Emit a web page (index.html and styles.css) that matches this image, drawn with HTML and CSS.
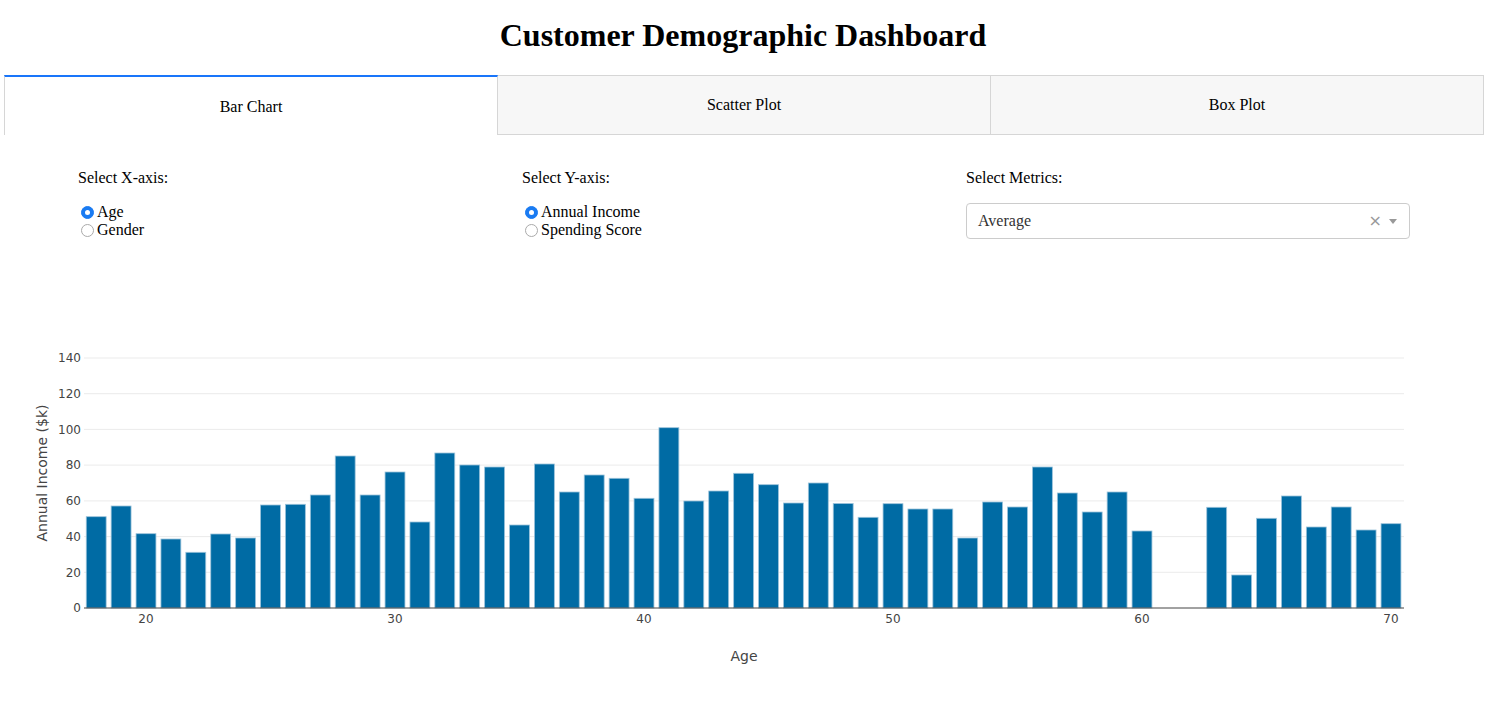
FILE: index.html
```html
<!DOCTYPE html>
<html>
<head>
<meta charset="utf-8">
<title>Customer Demographic Dashboard</title>
<link rel="stylesheet" href="styles.css">
</head>
<body>
<h1 class="title">Customer Demographic Dashboard</h1>
<div class="tabs">
  <div class="tab tab--selected">Bar Chart</div>
  <div class="tab">Scatter Plot</div>
  <div class="tab">Box Plot</div>
</div>
<div class="controls">
  <div class="control">
    <div class="control-label">Select X-axis:</div>
    <div class="radio-group">
      <label class="radio"><input type="radio" name="xaxis" checked><span>Age</span></label>
      <label class="radio"><input type="radio" name="xaxis"><span>Gender</span></label>
    </div>
  </div>
  <div class="control">
    <div class="control-label">Select Y-axis:</div>
    <div class="radio-group">
      <label class="radio"><input type="radio" name="yaxis" checked><span>Annual Income</span></label>
      <label class="radio"><input type="radio" name="yaxis"><span>Spending Score</span></label>
    </div>
  </div>
  <div class="control">
    <div class="control-label">Select Metrics:</div>
    <div class="dropdown">
      <span class="dropdown-value">Average</span>
      <span class="dropdown-clear">×</span>
      <span class="dropdown-arrow"></span>
    </div>
  </div>
</div>
<div class="chart">
<svg class="plot" width="1486" height="450" viewBox="0 258 1486 450" xmlns="http://www.w3.org/2000/svg">
  <g class="grid">
    <line x1="84" x2="1404" y1="572.3" y2="572.3"/>
    <line x1="84" x2="1404" y1="536.6" y2="536.6"/>
    <line x1="84" x2="1404" y1="500.9" y2="500.9"/>
    <line x1="84" x2="1404" y1="465.1" y2="465.1"/>
    <line x1="84" x2="1404" y1="429.4" y2="429.4"/>
    <line x1="84" x2="1404" y1="393.7" y2="393.7"/>
    <line x1="84" x2="1404" y1="358" y2="358"/>
  </g>
  <g class="bars">
    <rect x="86.25" y="516.7" width="19.9" height="91.3"/>
    <rect x="111.15" y="506" width="19.9" height="102"/>
    <rect x="136.05" y="533.7" width="19.9" height="74.3"/>
    <rect x="160.95" y="539" width="19.9" height="69"/>
    <rect x="185.85" y="552.3" width="19.9" height="55.7"/>
    <rect x="210.75" y="534" width="19.9" height="74"/>
    <rect x="235.65" y="538" width="19.9" height="70"/>
    <rect x="260.55" y="505" width="19.9" height="103"/>
    <rect x="285.45" y="504.3" width="19.9" height="103.7"/>
    <rect x="310.35" y="495" width="19.9" height="113"/>
    <rect x="335.25" y="456" width="19.9" height="152"/>
    <rect x="360.15" y="495" width="19.9" height="113"/>
    <rect x="385.05" y="472" width="19.9" height="136"/>
    <rect x="409.95" y="522" width="19.9" height="86"/>
    <rect x="434.85" y="453" width="19.9" height="155"/>
    <rect x="459.75" y="465" width="19.9" height="143"/>
    <rect x="484.65" y="467" width="19.9" height="141"/>
    <rect x="509.55" y="525" width="19.9" height="83"/>
    <rect x="534.45" y="464" width="19.9" height="144"/>
    <rect x="559.35" y="492" width="19.9" height="116"/>
    <rect x="584.25" y="475" width="19.9" height="133"/>
    <rect x="609.15" y="478.3" width="19.9" height="129.7"/>
    <rect x="634.05" y="498.3" width="19.9" height="109.7"/>
    <rect x="658.95" y="427.7" width="19.9" height="180.3"/>
    <rect x="683.85" y="501" width="19.9" height="107"/>
    <rect x="708.75" y="491" width="19.9" height="117"/>
    <rect x="733.65" y="473.3" width="19.9" height="134.7"/>
    <rect x="758.55" y="484.7" width="19.9" height="123.3"/>
    <rect x="783.45" y="503" width="19.9" height="105"/>
    <rect x="808.35" y="483" width="19.9" height="125"/>
    <rect x="833.25" y="503.5" width="19.9" height="104.5"/>
    <rect x="858.15" y="517.3" width="19.9" height="90.7"/>
    <rect x="883.05" y="503.7" width="19.9" height="104.3"/>
    <rect x="907.95" y="509" width="19.9" height="99"/>
    <rect x="932.85" y="509" width="19.9" height="99"/>
    <rect x="957.75" y="538" width="19.9" height="70"/>
    <rect x="982.65" y="502" width="19.9" height="106"/>
    <rect x="1007.55" y="507" width="19.9" height="101"/>
    <rect x="1032.45" y="467" width="19.9" height="141"/>
    <rect x="1057.35" y="493" width="19.9" height="115"/>
    <rect x="1082.25" y="512" width="19.9" height="96"/>
    <rect x="1107.15" y="492" width="19.9" height="116"/>
    <rect x="1132.05" y="531" width="19.9" height="77"/>
    <rect x="1206.75" y="507.3" width="19.9" height="100.7"/>
    <rect x="1231.65" y="575" width="19.9" height="33"/>
    <rect x="1256.55" y="518.3" width="19.9" height="89.7"/>
    <rect x="1281.45" y="496" width="19.9" height="112"/>
    <rect x="1306.35" y="527" width="19.9" height="81"/>
    <rect x="1331.25" y="507" width="19.9" height="101"/>
    <rect x="1356.15" y="530" width="19.9" height="78"/>
    <rect x="1381.05" y="523.7" width="19.9" height="84.3"/>
  </g>
  <line class="zeroline" x1="84" x2="1404" y1="608" y2="608"/>
  <g class="yticks">
    <text x="81" y="612.3">0</text>
    <text x="81" y="576.6">20</text>
    <text x="81" y="540.9">40</text>
    <text x="81" y="505.2">60</text>
    <text x="81" y="469.4">80</text>
    <text x="81" y="433.7">100</text>
    <text x="81" y="398">120</text>
    <text x="81" y="362.3">140</text>
  </g>
  <g class="xticks">
    <text x="146" y="623">20</text>
    <text x="395" y="623">30</text>
    <text x="644" y="623">40</text>
    <text x="893" y="623">50</text>
    <text x="1142" y="623">60</text>
    <text x="1391" y="623">70</text>
  </g>
  <text class="axis-title" x="744" y="661">Age</text>
  <text class="axis-title" x="0" y="0" transform="translate(47 473) rotate(-90)">Annual Income ($k)</text>
</svg>
</div>
</body>
</html>
```

FILE: styles.css
```css
html, body {
  margin: 0;
  padding: 0;
  background: #ffffff;
  font-family: "Liberation Serif", "Times New Roman", serif;
  font-size: 16px;
  color: #000;
}

.title {
  margin: 17px 0 21px;
  font-size: 32px;
  font-weight: bold;
  text-align: center;
  line-height: 37px;
}

.tabs {
  display: flex;
  margin: 0 2px 0 4px;
}

.tab {
  flex: 1 1 0;
  box-sizing: border-box;
  height: 60px;
  border: 1px solid #d6d6d6;
  background: #f7f7f7;
  display: flex;
  align-items: center;
  justify-content: center;
  line-height: 18px;
}

.tab + .tab {
  border-left: none;
}

.tab--selected {
  background: #ffffff;
  border-top: 2px solid #1975fa;
  border-bottom: none;
  padding-top: 1px;
}

.controls {
  display: flex;
  margin: 34px 0 0 78px;
}

.control {
  width: 444px;
}

.control-label {
  line-height: 18px;
  margin-bottom: 16px;
}

.radio-group {
  display: flex;
  flex-direction: column;
}

.radio {
  display: flex;
  align-items: center;
  height: 18px;
  line-height: 18px;
}

.radio input {
  appearance: none;
  -webkit-appearance: none;
  width: 13px;
  height: 13px;
  margin: 1px 3px 0 3px;
  border-radius: 50%;
  border: 1px solid #aaaaaa;
  background: #fff;
  box-sizing: border-box;
  position: relative;
}

.radio input:checked {
  background: #1a7bf2;
  border-color: #1a7bf2;
}

.radio input:checked::after {
  content: "";
  position: absolute;
  left: 50%;
  top: 50%;
  width: 5px;
  height: 5px;
  margin: -2.5px 0 0 -2.5px;
  border-radius: 50%;
  background: #fff;
}

.dropdown {
  box-sizing: border-box;
  width: 444px;
  height: 36px;
  border: 1px solid #cccccc;
  border-radius: 4px;
  display: flex;
  align-items: center;
  padding: 0 12px 0 11px;
}

.dropdown-value {
  flex: 1;
  color: #333;
}

.dropdown-clear {
  color: #999;
  font-family: "DejaVu Sans", sans-serif;
  font-size: 16px;
  line-height: 1;
  margin-right: 7px;
}

.dropdown-arrow {
  width: 0;
  height: 0;
  border-left: 4px solid transparent;
  border-right: 4px solid transparent;
  border-top: 5px solid #999;
  margin-top: 1px;
}

.chart {
  margin-top: 19px;
}

.plot {
  display: block;
}

.grid line {
  stroke: #ebebeb;
  stroke-width: 1;
}

.bars rect {
  fill: #006ba4;
  stroke: #9cc3db;
  stroke-width: 0.8;
}

.zeroline {
  stroke: #444;
  stroke-width: 1;
}

.yticks text {
  font-family: "DejaVu Sans", Verdana, sans-serif;
  font-size: 12px;
  fill: #444;
  text-anchor: end;
}

.xticks text {
  font-family: "DejaVu Sans", Verdana, sans-serif;
  font-size: 12px;
  fill: #444;
  text-anchor: middle;
}

.axis-title {
  font-family: "DejaVu Sans", Verdana, sans-serif;
  font-size: 14px;
  fill: #444;
  text-anchor: middle;
}
```
